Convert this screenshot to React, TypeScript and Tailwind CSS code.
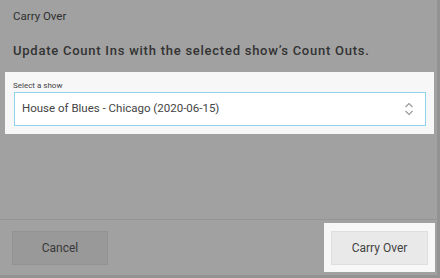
import React from "react";

function UpDownIcon() {
  return (
    <svg width="10" height="14" viewBox="0 0 10 14" fill="none" stroke="#9a9a9a" strokeWidth="1.2">
      <path d="M1.5 5 L5 1.5 L8.5 5" />
      <path d="M1.5 9 L5 12.5 L8.5 9" />
    </svg>
  );
}

export default function App() {
  return (
    <div
      className="w-[440px] h-[278px] bg-[#939393] overflow-hidden"
      style={{ fontFamily: "Roboto, 'Liberation Sans', sans-serif" }}
    >
      <div className="w-[437px] h-[275px] bg-[#a1a1a1] flex flex-col">
        <div className="pt-[6px] pl-[13px] text-[11.5px] leading-[20px] text-[#2f2f2f]">Carry Over</div>
        <div className="mt-[15px] pl-[13px] text-[13px] leading-[20px] font-medium tracking-[0.75px] text-[#333]">
          Update Count Ins with the selected show’s Count Outs.
        </div>

        <div className="mt-[11px] ml-[5px] w-[429px] bg-[#f7f7f7] pl-[8px] pt-[8px] pb-[8px]">
          <div className="text-[8px] leading-[12px] text-[#444]">Select a show</div>
          <div className="ml-[1px] w-[412px] h-[34px] bg-white border border-[#8fd3ec] flex items-center justify-between pl-[7px] pr-[11px]">
            <span className="text-[11.5px] text-[#444]">House of Blues - Chicago (2020-06-15)</span>
            <UpDownIcon />
          </div>
        </div>

        <div className="flex-1" />

        <div className="border-t border-[#959595] h-[56px] flex items-center justify-between pl-[12px] pr-[2px]">
          <button className="w-[96px] h-[34px] bg-[#999999] border border-[#939393] text-[12px] text-[#383838]">
            Cancel
          </button>
          <div className="w-[111px] h-[49px] bg-[#f7f7f7] flex items-center justify-center">
            <button className="w-[97px] h-[34px] bg-[#e9e9e9] border border-[#dedede] text-[12px] text-[#444]">
              Carry Over
            </button>
          </div>
        </div>
      </div>
    </div>
  );
}
